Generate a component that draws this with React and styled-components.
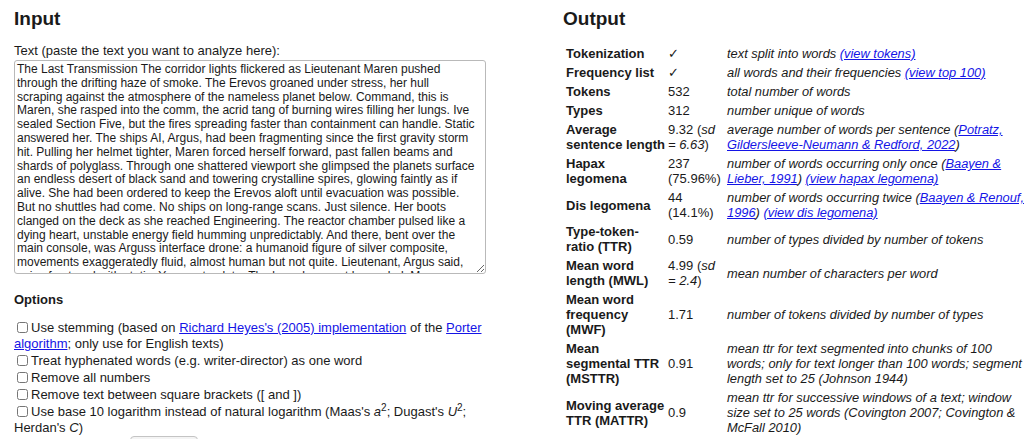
import React from 'react';
import styled, { createGlobalStyle } from 'styled-components';

const GlobalStyle = createGlobalStyle`
  html, body {
    margin: 0;
    padding: 0;
    background: #fff;
    overflow: hidden;
  }
  body {
    font-family: "Liberation Sans", Arial, Helvetica, sans-serif;
    color: #1a1a1a;
    font-size: 13px;
  }
  sup {
    line-height: 0;
    font-size: 10px;
  }
`;

const Page = styled.div`
  display: grid;
  grid-template-columns: 472px 458px;
  column-gap: 77px;
  padding: 8px 0 0 14px;
`;

const Column = styled.section`
  display: flex;
  flex-direction: column;
`;

const Heading = styled.h2`
  margin: 0 0 ${p => p.$gap || 0}px;
  font-size: 19px;
  font-weight: bold;
  line-height: 22px;
`;

const FieldLabel = styled.label`
  display: block;
  margin-top: 13px;
  font-size: 13px;
  line-height: 15px;
`;

const TextBox = styled.textarea`
  display: block;
  box-sizing: border-box;
  width: 472px;
  height: 214px;
  margin: 2px 0 0;
  padding: 2px;
  border: 1px solid #b9b9b9;
  border-radius: 3px;
  font-family: "Liberation Sans", Arial, sans-serif;
  font-size: 12px;
  line-height: 13.8px;
  color: #1a1a1a;
  white-space: pre;
  overflow: hidden;
  resize: vertical;
`;

const OptionsTitle = styled.div`
  margin-top: 18px;
  font-weight: bold;
  font-size: 13px;
  line-height: 15px;
`;

const OptionList = styled.div`
  display: flex;
  flex-direction: column;
  gap: 1px;
  margin-top: 13px;
`;

const Option = styled.label`
  display: block;
  font-size: 13px;
  line-height: 16px;
`;

const Check = styled.input.attrs({ type: 'checkbox' })`
  width: 11px;
  height: 11px;
  margin: 0 3px 0 3px;
  vertical-align: -1px;
`;

const Link = styled.a`
  color: #1414e6;
  text-decoration: underline;
  font-style: inherit;
`;

const ButtonRow = styled.div`
  display: flex;
  padding: 0 0 0 116px;
`;

const SubmitButton = styled.button`
  width: 68px;
  height: 22px;
  border: 1px solid #c4c4c4;
  border-radius: 4px;
  background: #f4f4f4;
  font-family: inherit;
  font-size: 13px;
`;

const Table = styled.div`
  display: grid;
  grid-template-columns: 102px 59px 302px;
  align-items: center;
  margin-left: 3px;
  font-size: 13px;
  line-height: 15px;
`;

const Cell = styled.div`
  padding: 2px ${p => p.$pad || 0}px 2px 0;
  font-weight: ${p => (p.$label ? 'bold' : 'normal')};
  font-style: ${p => (p.$desc ? 'italic' : 'normal')};
  font-size: ${p => (p.$desc ? '12.85px' : '13px')};
`;

const rows = [
  { label: 'Tokenization', value: '✓', desc: <>text split into words <Link href="#">(view tokens)</Link></> },
  { label: 'Frequency list', value: '✓', desc: <>all words and their frequencies <Link href="#">(view top 100)</Link></> },
  { label: 'Tokens', value: '532', desc: 'total number of words' },
  { label: 'Types', value: '312', desc: 'number unique of words' },
  {
    label: 'Average sentence length',
    value: <>9.32 (<i>sd</i> <i>= 6.63</i>)</>,
    desc: <>average number of words per sentence (<Link href="#">Potratz, Gildersleeve-Neumann &amp; Redford, 2022</Link>)</>,
  },
  {
    label: 'Hapax legomena',
    value: '237 (75.96%)',
    desc: <>number of words occurring only once (<Link href="#">Baayen &amp; Lieber, 1991</Link>) <Link href="#">(view hapax legomena)</Link></>,
  },
  {
    label: 'Dis legomena',
    value: '44 (14.1%)',
    desc: <>number of words occurring twice (<Link href="#">Baayen &amp; Renouf, 1996</Link>) <Link href="#">(view dis legomena)</Link></>,
  },
  { label: 'Type-token-ratio (TTR)', value: '0.59', desc: 'number of types divided by number of tokens' },
  { label: 'Mean word length (MWL)', value: <>4.99 (<i>sd</i> <i>= 2.4</i>)</>, desc: 'mean number of characters per word' },
  { label: 'Mean word frequency (MWF)', value: '1.71', desc: 'number of tokens divided by number of types' },
  {
    label: 'Mean segmental TTR (MSTTR)',
    value: '0.91',
    desc: 'mean ttr for text segmented into chunks of 100 words; only for text longer than 100 words; segment length set to 25 (Johnson 1944)',
  },
  {
    label: 'Moving average TTR (MATTR)',
    value: '0.9',
    desc: 'mean ttr for successive windows of a text; window size set to 25 words (Covington 2007; Covington & McFall 2010)',
  },
];

const sampleText = [
  'The Last Transmission The corridor lights flickered as Lieutenant Maren pushed',
  'through the drifting haze of smoke. The Erevos groaned under stress, her hull',
  'scraping against the atmosphere of the nameless planet below. Command, this is',
  'Maren, she rasped into the comm, the acrid tang of burning wires filling her lungs. Ive',
  'sealed Section Five, but the fires spreading faster than containment can handle. Static',
  'answered her. The ships AI, Argus, had been fragmenting since the first gravity storm',
  'hit. Pulling her helmet tighter, Maren forced herself forward, past fallen beams and',
  'shards of polyglass. Through one shattered viewport she glimpsed the planets surface',
  'an endless desert of black sand and towering crystalline spires, glowing faintly as if',
  'alive. She had been ordered to keep the Erevos aloft until evacuation was possible.',
  'But no shuttles had come. No ships on long-range scans. Just silence. Her boots',
  'clanged on the deck as she reached Engineering. The reactor chamber pulsed like a',
  'dying heart, unstable energy field humming unpredictably. And there, bent over the',
  'main console, was Arguss interface drone: a humanoid figure of silver composite,',
  'movements exaggeratedly fluid, almost human but not quite. Lieutenant, Argus said,',
  'voice fractured with static. You are too late. The breach cannot be sealed. Maren',
  'clenched her jaw and reached for the manual override.',
].join('\n');

export default function App() {
  return (
    <>
      <GlobalStyle />
      <Page>
        <Column>
          <Heading>Input</Heading>
          <FieldLabel htmlFor="text">Text (paste the text you want to analyze here):</FieldLabel>
          <TextBox id="text" wrap="off" defaultValue={sampleText} />
          <OptionsTitle>Options</OptionsTitle>
          <OptionList>
            <Option>
              <Check />Use stemming (based on <Link href="#">Richard Heyes's (2005) implementation</Link> of the{' '}
              <Link href="#">Porter algorithm</Link>; only use for English texts)
            </Option>
            <Option>
              <Check />Treat hyphenated words (e.g. writer-director) as one word
            </Option>
            <Option>
              <Check />Remove all numbers
            </Option>
            <Option>
              <Check />Remove text between square brackets ([ and ])
            </Option>
            <Option>
              <Check />Use base 10 logarithm instead of natural logarithm (Maas's <i>a</i><sup>2</sup>; Dugast's{' '}
              <i>U</i><sup>2</sup>; Herdan's <i>C</i>)
            </Option>
          </OptionList>
          <ButtonRow>
            <SubmitButton>Analyze</SubmitButton>
          </ButtonRow>
        </Column>
        <Column>
          <Heading $gap={14}>Output</Heading>
          <Table>
            {rows.map(r => (
              <React.Fragment key={r.label}>
                <Cell $label $pad={2}>{r.label}</Cell>
                <Cell $pad={5}>{r.value}</Cell>
                <Cell $desc>{r.desc}</Cell>
              </React.Fragment>
            ))}
          </Table>
        </Column>
      </Page>
    </>
  );
}
